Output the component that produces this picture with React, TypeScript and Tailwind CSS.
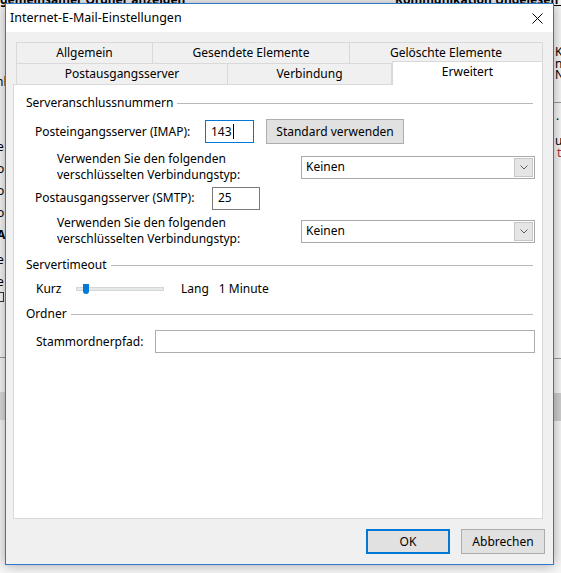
import React from "react";

const FONT = { fontFamily: '"Segoe UI", "Noto Sans", "Open Sans", sans-serif' };

function GroupHeader({ title, className = "" }: { title: string; className?: string }) {
  return (
    <div className={`flex items-center h-[14px] pl-[12px] pr-[9px] ${className}`}>
      <span className="leading-none pr-[4px]">{title}</span>
      <div className="flex-1 h-px bg-[#b8b8b8]" />
    </div>
  );
}

function Select({ value }: { value: string }) {
  return (
    <div className="w-[234px] h-[23px] border border-[#a9a9a9] bg-white flex items-center">
      <span className="flex-1 pl-[4px]">{value}</span>
      <div className="w-[19px] h-[19px] mr-[1px] bg-[#e5e5e5] border border-[#c7c7c7] flex items-center justify-center">
        <svg width="8" height="5" viewBox="0 0 8 5">
          <path d="M0.5 0.5 L4 4 L7.5 0.5" fill="none" stroke="#606060" strokeWidth="1" />
        </svg>
      </div>
    </div>
  );
}

function TwoLineLabel() {
  return (
    <div className="w-[287px] pl-[43px] leading-[16px]">
      <div>Verwenden Sie den folgenden</div>
      <div>verschlüsselten Verbindungstyp:</div>
    </div>
  );
}

export default function App() {
  const row1 = [
    { label: "Allgemein", w: "w-[137px]" },
    { label: "Gesendete Elemente", w: "w-[197px]" },
    { label: "Gelöschte Elemente", w: "w-[193px]" },
  ];
  const row2 = [
    { label: "Postausgangsserver", w: "w-[212px]", active: false },
    { label: "Verbindung", w: "w-[164px]", active: false },
    { label: "Erweitert", w: "w-[151px]", active: true },
  ];

  return (
    <div className="relative w-[561px] h-[573px] overflow-hidden bg-[#f7f7f7] text-[12px] text-black" style={FONT}>
      {/* window behind the dialog */}
      <div className="absolute left-0 top-0 w-[561px] h-[573px] text-[12px] leading-none">
        <div className="absolute left-0 top-[-6px] font-bold underline whitespace-nowrap">gemeinsamer Ordner anzeigen</div>
        <div className="absolute left-[395px] top-[-6px] font-bold underline whitespace-nowrap">Kommunikation Ungelesen Übersicht</div>
        <div className="absolute left-[-4px] top-[76px]">nl</div>
        <div className="absolute left-[-3px] top-[141px]">e</div>
        <div className="absolute left-[-3px] top-[163px]">o</div>
        <div className="absolute left-[-3px] top-[185px]">o</div>
        <div className="absolute left-[-3px] top-[207px]">o</div>
        <div className="absolute left-[-3px] top-[229px] font-bold">Al</div>
        <div className="absolute left-[-3px] top-[254px]">e</div>
        <div className="absolute left-[-3px] top-[276px]">e</div>
        <div className="absolute left-[-4px] top-[292px] w-[8px] h-[10px] border border-[#333]" />
        <div className="absolute left-0 top-[357px] w-[6px] h-px bg-[#999]" />
        <div className="absolute left-0 top-[392px] w-[6px] h-[28px] bg-[#dcdcdc]" />
        <div className="absolute left-[555px] top-[46px]">Ko</div>
        <div className="absolute left-[555px] top-[58px]">n</div>
        <div className="absolute left-[555px] top-[69px]">N</div>
        <div className="absolute left-[553px] top-[102px] w-[8px] h-px bg-[#999]" />
        <div className="absolute left-[556px] top-[110px]">.</div>
        <div className="absolute left-[555px] top-[135px]">ur</div>
        <div className="absolute left-[557px] top-[147px] text-[#a33]">t</div>
        <div className="absolute left-[553px] top-[358px] w-[8px] h-px bg-[#999]" />
        <div className="absolute left-[553px] top-[393px] w-[8px] h-[28px] bg-[#cfcfcf]" />
      </div>

      {/* dialog */}
      <div className="absolute left-[5px] top-[3px] w-[549px] h-[562px] border border-[#2b79c7] bg-[#f0f0f0] flex flex-col shadow-[0_0_12px_rgba(0,0,0,0.35)]">
        <div className="h-[28px] bg-white flex items-center justify-between pl-[4px] pr-[10px] shrink-0">
          <span className="text-[12.5px]">Internet-E-Mail-Einstellungen</span>
          <svg width="11" height="11" viewBox="0 0 11 11">
            <path d="M0.5 0.5 L10.5 10.5 M10.5 0.5 L0.5 10.5" stroke="#000" strokeWidth="1" />
          </svg>
        </div>

        <div className="flex-1 pt-[10px] pl-[7px] pr-[10px] flex flex-col">
          {/* tabs */}
          <div className="pl-[3px] w-[530px]">
            <div className="flex h-[21px]">
              {row1.map((t, i) => (
                <div
                  key={t.label}
                  className={`${t.w} flex items-center justify-center border-t border-[#d9d9d9] border-r ${i === 0 ? "border-l" : ""} bg-[#f0f0f0]`}
                >
                  {t.label}
                </div>
              ))}
            </div>
            <div className="flex h-[21px] relative">
              {row2.map((t, i) =>
                t.active ? (
                  <div
                    key={t.label}
                    className={`${t.w} relative z-10 -mt-[2px] h-[24px] pb-[4px] bg-white border-t border-r border-l border-[#d9d9d9] flex items-center justify-center`}
                  >
                    {t.label}
                  </div>
                ) : (
                  <div
                    key={t.label}
                    className={`${t.w} flex items-center justify-center border-t border-r border-[#d9d9d9] ${i === 0 ? "border-l" : ""} bg-[#f0f0f0]`}
                  >
                    {t.label}
                  </div>
                )
              )}
            </div>
          </div>

          {/* panel */}
          <div className="w-[530px] h-[435px] bg-white border border-[#d9d9d9] flex flex-col">
            <GroupHeader title="Serveranschlussnummern" className="mt-[11px]" />

            <div className="flex items-center mt-[9px] h-[25px]">
              <div className="w-[191px] pl-[21px]">Posteingangsserver (IMAP):</div>
              <div className="w-[49px] h-[23px] border border-[#0078d7] flex items-center pl-[5px]">
                143<span className="inline-block w-px h-[15px] bg-black ml-[1px]" />
              </div>
              <button className="ml-[12px] w-[138px] h-[25px] bg-[#e1e1e1] border border-[#adadad]">
                Standard verwenden
              </button>
            </div>

            <div className="flex items-center mt-[7px]">
              <TwoLineLabel />
              <Select value="Keinen" />
            </div>

            <div className="flex items-center mt-[4px] h-[22px]">
              <div className="w-[198px] pl-[21px]">Postausgangsserver (SMTP):</div>
              <div className="w-[48px] h-[23px] border border-[#7a7a7a] flex items-center pl-[5px]">25</div>
            </div>

            <div className="flex items-center mt-[6px]">
              <TwoLineLabel />
              <Select value="Keinen" />
            </div>

            <GroupHeader title="Servertimeout" className="mt-[11px]" />

            <div className="flex items-center mt-[9px] h-[16px]">
              <div className="w-[62px] pl-[22px]">Kurz</div>
              <div className="relative w-[88px] h-[4px] bg-[#e7eaea] border border-[#d6d6d6]">
                <div className="absolute left-[6px] top-[-4px] w-[6px] h-[10px] bg-[#007ad9] rounded-b-[3px]" />
              </div>
              <div className="ml-[17px]">Lang</div>
              <div className="ml-[10px]">1 Minute</div>
            </div>

            <GroupHeader title="Ordner" className="mt-[10px]" />

            <div className="flex items-center mt-[9px]">
              <div className="w-[141px] pl-[22px]">Stammordnerpfad:</div>
              <div className="w-[380px] h-[23px] border border-[#abadb3] bg-white" />
            </div>
          </div>

          {/* buttons */}
          <div className="flex justify-end gap-[11px] mt-[10px] mr-[-2px]">
            <button className="w-[84px] h-[25px] bg-[#e1e1e1] border-2 border-[#0078d7]">OK</button>
            <button className="w-[84px] h-[25px] bg-[#e1e1e1] border border-[#adadad]">Abbrechen</button>
          </div>
        </div>
      </div>
    </div>
  );
}
